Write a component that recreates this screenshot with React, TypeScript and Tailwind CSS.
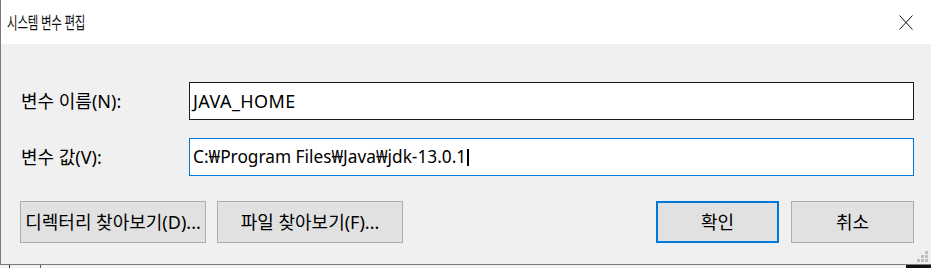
import React from "react";

const kr = "font-['Segoe_UI','Noto_Sans','Noto_Sans_CJK_KR',sans-serif]";

export default function App() {
  return (
    <div className="w-[931px] h-[268px] flex flex-col overflow-hidden bg-[#f0f0f0] text-black">
      <div className="relative flex flex-col h-[265px] border-l border-b border-[#7a7a7a]">
        {/* title bar */}
        <div className="h-[44px] bg-white flex items-center justify-between pl-[6px] pr-[18px]">
          <span className={`${kr} block text-[11.5px] leading-[12px] tracking-[-0.2px] [transform:scaleY(1.5)] origin-center text-[#111] mt-[1px]`}>
            시스템 변수 편집
          </span>
          <svg width="14" height="15" viewBox="0 0 14 15" className="mt-[1px]">
            <path d="M0.5 0.5 L13.5 14.5 M13.5 0.5 L0.5 14.5" stroke="#111" strokeWidth="1" fill="none" />
          </svg>
        </div>
        {/* body */}
        <div className={`flex-1 flex flex-col pt-[38px] pl-[19px] pr-[17px] ${kr}`}>
          <div className="flex items-center">
            <span className="w-[169px] text-[18px] leading-none pl-[1px]">변수 이름(N):</span>
            <div className="flex-1 h-[38px] bg-white border border-[#1a1a1a] flex items-center pl-[3px] text-[18px] tracking-[0.4px]">
              JAVA_HOME
            </div>
          </div>
          <div className="flex items-center mt-[18px]">
            <span className="w-[169px] text-[18px] leading-none pl-[1px]">변수 값(V):</span>
            <div className="flex-1 h-[38px] bg-white border border-[#0078d7] flex items-center pl-[3px] text-[17.3px]">
              <span>C:₩Program Files₩Java₩jdk-13.0.1</span>
              <span className="w-[2px] h-[17px] bg-black ml-[1px]" />
            </div>
          </div>
          <div className="flex items-center mt-[25px] text-[18px]">
            <div className="w-[186px] h-[42px] bg-[#e1e1e1] border border-[#adadad] flex items-center justify-center whitespace-nowrap overflow-hidden">
              디렉터리 찾아보기(D)...
            </div>
            <div className="w-[186px] h-[42px] ml-[11px] bg-[#e1e1e1] border border-[#adadad] flex items-center justify-center whitespace-nowrap">
              파일 찾아보기(F)...
            </div>
            <div className="flex-1" />
            <div className="w-[123px] h-[42px] bg-[#e1e1e1] border-2 border-[#0078d7] flex items-center justify-center">
              확인
            </div>
            <div className="w-[123px] h-[42px] ml-[12px] bg-[#e1e1e1] border border-[#adadad] flex items-center justify-center">
              취소
            </div>
          </div>
        </div>
        <svg width="12" height="12" viewBox="0 0 12 12" className="absolute right-[2px] bottom-[1px]">
          <g fill="#bdbdbd">
            <rect x="8" y="0" width="3" height="3" />
            <rect x="4" y="4" width="3" height="3" />
            <rect x="8" y="4" width="3" height="3" />
            <rect x="0" y="8" width="3" height="3" />
            <rect x="4" y="8" width="3" height="3" />
            <rect x="8" y="8" width="3" height="3" />
          </g>
        </svg>
      </div>
      <div className="flex-1 flex bg-[#f3f3f3]">
        <div className="w-[9px]" />
        <div className="w-[1px] bg-[#333]" />
        <div className="w-[30px]" />
        <div className="w-[1px] bg-[#666]" />
        <div className="flex-1" />
        <div className="w-[25px] bg-[#111]" />
      </div>
    </div>
  );
}
